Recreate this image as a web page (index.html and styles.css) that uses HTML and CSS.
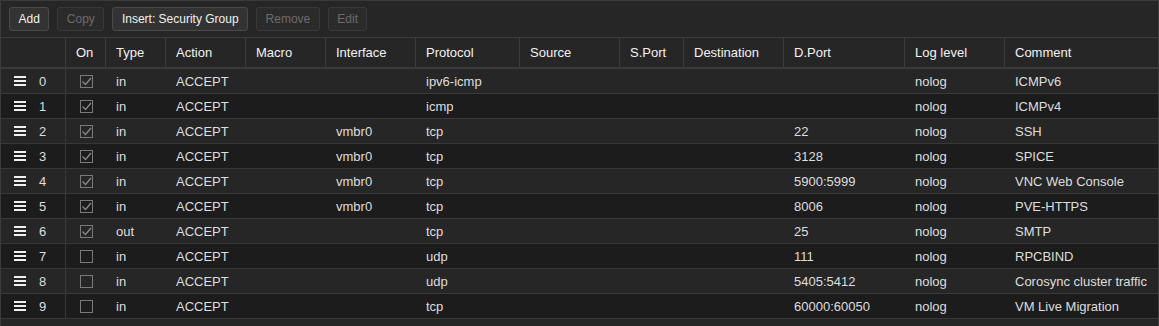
FILE: index.html
```html
<!DOCTYPE html>
<html>
<head>
<meta charset="utf-8">
<link rel="stylesheet" href="styles.css">
</head>
<body>
<div class="panel">
  <div class="toolbar">
    <button class="btn">Add</button>
    <button class="btn disabled">Copy</button>
    <button class="btn">Insert: Security Group</button>
    <button class="btn disabled">Remove</button>
    <button class="btn disabled">Edit</button>
  </div>
  <div class="grid">
    <div class="row head">
      <div class="c c0"></div>
      <div class="c">On</div>
      <div class="c">Type</div>
      <div class="c">Action</div>
      <div class="c">Macro</div>
      <div class="c">Interface</div>
      <div class="c">Protocol</div>
      <div class="c">Source</div>
      <div class="c">S.Port</div>
      <div class="c">Destination</div>
      <div class="c">D.Port</div>
      <div class="c">Log level</div>
      <div class="c last">Comment</div>
    </div>
    <div id="body"></div>
  </div>
</div>
<script src="app.js"></script>
</body>
</html>
```

FILE: app.js
```js
const rows = [
  [1,'in','ACCEPT','','','ipv6-icmp','','','','','nolog','ICMPv6'],
  [1,'in','ACCEPT','','','icmp','','','','','nolog','ICMPv4'],
  [1,'in','ACCEPT','','vmbr0','tcp','','','','22','nolog','SSH'],
  [1,'in','ACCEPT','','vmbr0','tcp','','','','3128','nolog','SPICE'],
  [1,'in','ACCEPT','','vmbr0','tcp','','','','5900:5999','nolog','VNC Web Console'],
  [1,'in','ACCEPT','','vmbr0','tcp','','','','8006','nolog','PVE-HTTPS'],
  [1,'out','ACCEPT','','','tcp','','','','25','nolog','SMTP'],
  [0,'in','ACCEPT','','','udp','','','','111','nolog','RPCBIND'],
  [0,'in','ACCEPT','','','udp','','','','5405:5412','nolog','Corosync cluster traffic'],
  [0,'in','ACCEPT','','','tcp','','','','60000:60050','nolog','VM Live Migration']
];
const body = document.getElementById('body');
const check = '<svg class="cb" width="13" height="13" viewBox="0 0 13 13"><rect x="0.5" y="0.5" width="12" height="12" fill="none" stroke="#7a7a7a"/><path d="M2.5 6.5 L5.5 9.5 L11 3" fill="none" stroke="#8a8a8a" stroke-width="1.3"/></svg>';
const empty = '<svg class="cb" width="13" height="13" viewBox="0 0 13 13"><rect x="0.5" y="0.5" width="12" height="12" fill="none" stroke="#7a7a7a"/></svg>';
const ham = '<svg class="ham" width="12" height="10" viewBox="0 0 12 10"><rect x="0" y="0" width="12" height="2" fill="#f0f0f0"/><rect x="0" y="4" width="12" height="2" fill="#f0f0f0"/><rect x="0" y="8" width="12" height="2" fill="#f0f0f0"/></svg>';
rows.forEach((r, i) => {
  const el = document.createElement('div');
  el.className = 'row data ' + (i % 2 ? 'odd' : 'even');
  let h = '<div class="c c0">' + ham + '<span class="num">' + i + '</span></div>';
  h += '<div class="c con">' + (r[0] ? check : empty) + '</div>';
  for (let k = 1; k < r.length; k++) {
    h += '<div class="c' + (k === r.length - 1 ? ' last' : '') + '">' + r[k] + '</div>';
  }
  el.innerHTML = h;
  body.appendChild(el);
});
```

FILE: styles.css
```css
html, body {
  margin: 0;
  padding: 0;
  background: #1e1e1e;
}
body {
  font-family: "Liberation Sans", Arial, sans-serif;
  font-size: 13px;
  color: #dedede;
  overflow: hidden;
}
.panel {
  width: 1159px;
  height: 326px;
  box-sizing: border-box;
  border-top: 1px solid #3b3b3b;
  border-left: 1px solid #3b3b3b;
  border-right: 1px solid #3b3b3b;
  background: #262626;
  overflow: hidden;
}
.toolbar {
  height: 37px;
  box-sizing: border-box;
  padding: 6px 8px;
  display: flex;
  gap: 8px;
  border-bottom: 1px solid #3b3b3b;
  background: #262626;
}
.btn {
  height: 24px;
  box-sizing: border-box;
  padding: 0 8.5px;
  font: 12px "Liberation Sans", Arial, sans-serif;
  color: #f0f0f0;
  background: #333333;
  border: 1px solid #4a4a4a;
  border-radius: 3px;
}
.btn.disabled {
  color: #6c6c6c;
  background: #2b2b2b;
  border-color: #393939;
}
.row {
  display: grid;
  grid-template-columns: 65px 40px 60px 80px 80px 90px 104px 100px 64px 100px 121px 100px 1fr;
}
.head {
  height: 31px;
  box-sizing: border-box;
  border-bottom: 2px solid #3b3b3b;
  background: #262626;
  color: #f2f2f2;
}
.head .c {
  border-right: 1px solid #3b3b3b;
}
.head .c.last {
  border-right: none;
}
.c {
  padding-left: 10px;
  display: flex;
  align-items: center;
  white-space: nowrap;
  overflow: hidden;
}
.data {
  height: 25px;
  box-sizing: border-box;
  border-bottom: 1px solid #383838;
}
.data.even { background: #262626; }
.data.odd { background: #1c1c1c; }
.data .c0 {
  border-right: 1px solid #383838;
  padding-left: 13px;
}
.ham { margin-right: 13px; }
.con {
  padding-left: 14px;
}
.cb { display: block; }
```
